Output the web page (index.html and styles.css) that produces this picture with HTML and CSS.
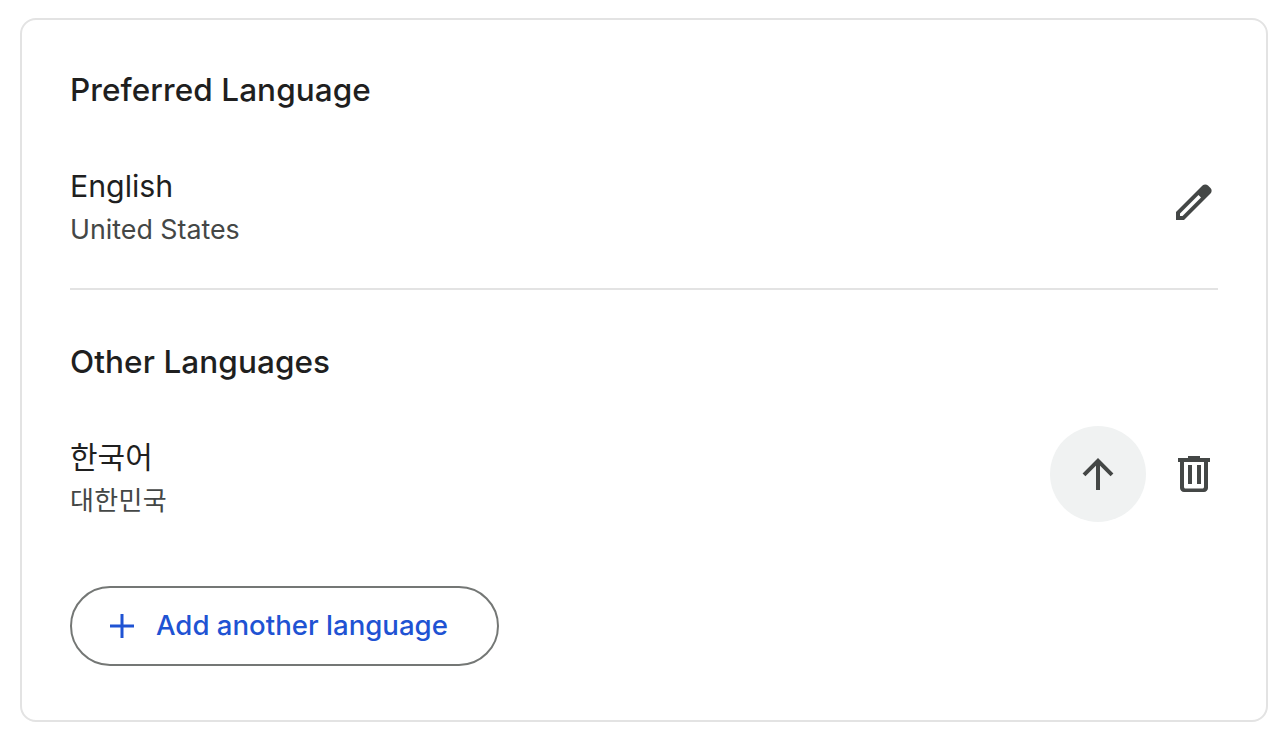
FILE: index.html
```html
<!DOCTYPE html>
<html lang="en">
<head>
  <meta charset="UTF-8" />
  <title>Language</title>
  <link rel="stylesheet" href="styles.css">
</head>
<body>
  <div class="card">
    <section class="preferred">
      <h2>Preferred Language</h2>
      <div class="lang-row">
        <div class="lang-text">
          <div class="lang-name">English</div>
          <div class="lang-region">United States</div>
        </div>
        <div class="lang-actions">
          <button class="icon-btn" aria-label="Edit">
            <svg width="48" height="48" viewBox="0 0 48 48"><path fill-rule="evenodd" d="M6 42v-8L32.500 7.500c1.500-1.500 4-1.500 5.500 0l2.500 2.500c1.500 1.500 1.500 4 0 5.500L14 42H6zM10 38h2.500L31 19.500 28.500 17 10 35.500V38z" fill="#444746"/></svg>
          </button>
        </div>
      </div>
    </section>
    <section class="others">
      <h2>Other Languages</h2>
      <div class="lang-row">
        <div class="lang-text">
          <div class="lang-name ko">한국어</div>
          <div class="lang-region ko">대한민국</div>
        </div>
        <div class="lang-actions">
          <button class="icon-btn round" aria-label="Move up">
            <svg width="48" height="48" viewBox="0 0 48 48"><path d="M24 40V12M10 24.800 24 10.800 38 24.800" fill="none" stroke="#444746" stroke-width="4"/></svg>
          </button>
          <button class="icon-btn" aria-label="Delete">
            <svg width="48" height="48" viewBox="0 0 48 48"><path fill-rule="evenodd" d="M18 6h12v2h10v4H8V8h10V6zM10 12h4v25c0 .8.700 1.500 1.500 1.500h17c.8 0 1.500-.7 1.500-1.500V12h4v26c0 2.200-1.800 4-4 4H14c-2.200 0-4-1.800-4-4V12zm8 3h4v19h-4V15zm9 0h4v19h-4V15z" fill="#444746"/></svg>
          </button>
        </div>
      </div>
      <button class="add-btn">
        <svg width="32" height="32" viewBox="0 0 32 32"><path d="M16 4v24M4 16h24" fill="none" stroke="#1f53d3" stroke-width="3"/></svg>
        <span>Add another language</span>
      </button>
    </section>
  </div>
</body>
</html>
```

FILE: styles.css
```css
body {
  margin: 0;
  padding: 18px 16px 20px 20px;
  background: #ffffff;
  font-family: 'Inter', 'Noto Sans CJK KR', sans-serif;
  color: #1f1f1f;
}
.card {
  height: 704px;
  box-sizing: border-box;
  border: 2px solid #e3e3e3;
  border-radius: 16px;
  padding: 0 48px;
}
h2 {
  margin: 0;
  font-size: 31.5px;
  line-height: 40px;
  font-weight: 500;
  letter-spacing: 0.08px;
}
.preferred {
  padding-top: 50px;
  height: 270px;
  box-sizing: border-box;
  border-bottom: 2px solid #e3e3e3;
}
.others {
  padding-top: 52px;
}
.lang-row {
  display: flex;
  align-items: flex-start;
  justify-content: space-between;
  margin-top: 44px;
}
.lang-text {
  padding-top: 12px;
}
.lang-name {
  font-size: 30.3px;
  line-height: 40px;
}
.lang-region {
  font-size: 26.8px;
  line-height: 40px;
  margin-top: 3px;
  color: #444746;
}
.lang-name.ko {
  font-size: 30px;
  margin-top: -1px;
}
.lang-region.ko {
  font-size: 26px;
  letter-spacing: 0.3px;
  margin-top: 4px;
}
.lang-actions {
  display: flex;
  align-items: center;
  margin-right: -24px;
}
.icon-btn {
  width: 96px;
  height: 96px;
  padding: 0;
  border: none;
  background: none;
  display: flex;
  align-items: center;
  justify-content: center;
}
.icon-btn.round {
  background: #f0f2f2;
  border-radius: 50%;
}
.add-btn {
  display: flex;
  align-items: center;
  gap: 18px;
  height: 80px;
  width: 429px;
  box-sizing: border-box;
  margin-top: 64px;
  padding: 0 34px;
  border: 2px solid #747775;
  border-radius: 40px;
  background: #ffffff;
  color: #1f53d3;
  font-family: inherit;
  font-size: 27.6px;
  font-weight: 500;
}
.add-btn span {
  margin-bottom: 2px;
}
```
